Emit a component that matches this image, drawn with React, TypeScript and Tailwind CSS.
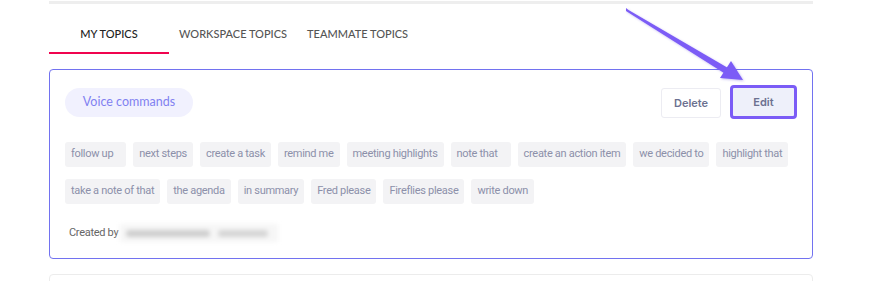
import { Fragment } from "react";

const ROW_ONE = [
  { label: "follow up", extra: true },
  { label: "next steps" },
  { label: "create a task" },
  { label: "remind me" },
  { label: "meeting highlights" },
  { label: "note that", extra: true },
  { label: "create an action item" },
  { label: "we decided to" },
  { label: "highlight that" },
];

const ROW_TWO = [
  { label: "take a note of that" },
  { label: "the agenda" },
  { label: "in summary" },
  { label: "Fred please" },
  { label: "Fireflies please" },
  { label: "write down" },
];

type Chip = { label: string; extra?: boolean };

function ChipRow({ chips }: { chips: Chip[] }) {
  return (
    <div className="flex gap-[7px]">
      {chips.map((c) => (
        <span
          key={c.label}
          className={
            c.extra
              ? "shrink-0 whitespace-nowrap h-[25px] flex items-center pl-[6px] pr-[13px] rounded-[3px] bg-[#f3f3f5] text-[11px] tracking-[-0.3px] text-[#8c90aa]"
              : "shrink-0 whitespace-nowrap h-[25px] flex items-center px-[6px] rounded-[3px] bg-[#f3f3f5] text-[11px] tracking-[-0.3px] text-[#8c90aa]"
          }
        >
          {c.label}
        </span>
      ))}
    </div>
  );
}

function Arrow() {
  return (
    <svg
      className="absolute left-0 top-0 pointer-events-none"
      width="871"
      height="281"
      viewBox="0 0 871 281"
    >
      <defs>
        <filter id="sh" x="-20%" y="-20%" width="140%" height="140%">
          <feDropShadow dx="1" dy="1" stdDeviation="1.2" floodColor="#5b3fd6" floodOpacity="0.35" />
        </filter>
      </defs>
      <g filter="url(#sh)" fill="#7b5cf6">
        <polygon points="626,8 628.5,10 728,68 724,73 626,11" />
        <polygon points="731,61 743,80 720,78" />
      </g>
    </svg>
  );
}

export default function App() {
  return (
    <div className="relative w-[871px] h-[281px] overflow-hidden bg-white font-['Roboto',sans-serif]">
      <div className="ml-[49px] w-[764px]">
        <div className="h-[3px] mt-[1px] bg-[#eeeeee]" />
        <div className="flex h-[50px] font-['Lato',sans-serif] text-[11px] font-medium uppercase tracking-[0px]">
          {["My Topics", "Workspace Topics", "Teammate Topics"].map((t, i) => (
            <Fragment key={t}>
              <div
                className={
                  i === 0
                    ? "min-w-[120px] px-[10px] pt-[12px] flex items-center justify-center border-b-2 border-[#f0044f] text-[#222222]"
                    : "min-w-[120px] px-[10px] pt-[12px] flex items-center justify-center border-b-2 border-transparent text-[#555555]"
                }
              >
                <span>{t}</span>
              </div>
            </Fragment>
          ))}
        </div>

        <div className="mt-[15px] h-[190px] rounded-[4px] border border-[#7272f0] pl-[15px] pr-[15px] pt-[18px]">
          <div className="flex items-start justify-between">
            <span className="h-[29px] w-[128px] flex items-center justify-center rounded-full bg-[#f1f1fe] font-['Lato',sans-serif] text-[12.5px] text-[#8181f1]">
              Voice commands
            </span>
            <div className="flex items-start gap-[9px]">
              <button className="h-[30px] w-[60px] rounded-[3px] border border-[#ececf2] bg-white font-['Inter',sans-serif] text-[11px] font-semibold text-[#6c7190]">
                Delete
              </button>
              <button className="-mt-[3px] h-[34px] w-[67px] rounded-[4px] border-[3px] border-[#7b5cf6] bg-[#eef0fa] font-['Inter',sans-serif] text-[11px] font-semibold text-[#6c7190]">
                Edit
              </button>
            </div>
          </div>

          <div className="mt-[23px] flex flex-col gap-[12px]">
            <ChipRow chips={ROW_ONE} />
            <ChipRow chips={ROW_TWO} />
          </div>

          <div className="mt-[20px] flex items-center text-[11px] tracking-[-0.3px] text-[#666666]">
            <span className="pl-[4px]">Created by</span>
            <div className="ml-[2px] h-[18px] w-[158px] flex items-center gap-[8px] px-[6px] bg-[#f6f6f6] blur-[2px]">
              <span className="h-[7px] w-[84px] rounded bg-[#cfcfcf]" />
              <span className="h-[7px] w-[50px] rounded bg-[#d6d6d6]" />
            </div>
          </div>
        </div>

        <div className="mt-[15px] h-[30px] rounded-[4px] border border-[#ececec]" />
      </div>
      <Arrow />
    </div>
  );
}
